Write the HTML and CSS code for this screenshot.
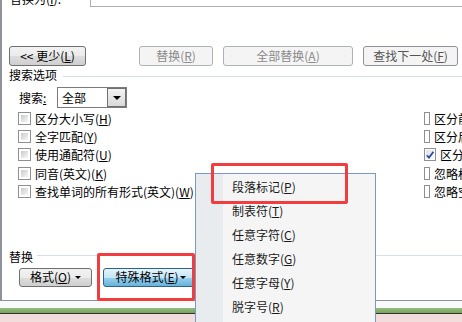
FILE: index.html
```html
<!DOCTYPE html>
<html lang="zh-CN">
<head>
    <meta charset="UTF-8">
    <title>查找和替换</title>
    <link rel="stylesheet" href="styles.css">
</head>
<body>
    <div class="screen">
        <div class="dialog">
            <div class="top-row">
                <span class="top-label">替换为(<u>I</u>):</span>
                <div class="top-input"></div>
            </div>

            <div class="btn-row">
                <button class="btn">&lt;&lt; 更少(<u>L</u>)</button>
                <button class="btn off push w-replace">替换(<u>R</u>)</button>
                <button class="btn off w-all">全部替换(<u>A</u>)</button>
                <button class="btn off find">查找下一处(<u>F</u>)</button>
            </div>

            <!-- 搜索选项 -->
            <div class="group-title">
                <span>搜索选项</span>
                <i class="rule"></i>
            </div>
            <div class="search-row">
                <span class="search-label">搜索<u>:</u></span>
                <div class="select">
                    <span class="select-text">全部</span>
                    <span class="select-btn"><i class="tri"></i></span>
                </div>
            </div>

            <div class="options">
                <div class="col">
                    <label class="check"><span class="box"></span>区分大小写(<u>H</u>)</label>
                    <label class="check"><span class="box"></span>全字匹配(<u>Y</u>)</label>
                    <label class="check"><span class="box"></span>使用通配符(<u>U</u>)</label>
                    <label class="check"><span class="box"></span>同音(英文)(<u>K</u>)</label>
                    <label class="check"><span class="box"></span>查找单词的所有形式(英文)(<u>W</u>)</label>
                </div>
                <div class="col">
                    <label class="check"><span class="box"></span>区分前缀(<u>X</u>)</label>
                    <label class="check"><span class="box"></span>区分后缀(<u>T</u>)</label>
                    <label class="check"><span class="box checked"><svg width="8" height="8" viewBox="0 0 8 8"><path d="M0.8 4.2 L3 6.6 L7.4 0.8" stroke="#2b4c9a" stroke-width="1.7" fill="none"/></svg></span>区分全/半角(<u>M</u>)</label>
                    <label class="check"><span class="box"></span>忽略标点符号(<u>S</u>)</label>
                    <label class="check"><span class="box"></span>忽略空格(<u>W</u>)</label>
                </div>
            </div>

            <!-- 替换 -->
            <div class="group-title replace">
                <span>替换</span>
                <i class="rule"></i>
            </div>
            <div class="fmt-row">
                <button class="btn w-fmt">格式(<u>O</u>) <i class="tri small"></i></button>
                <button class="btn pressed w-special">特殊格式(<u>E</u>)<i class="tri small"></i></button>
            </div>
        </div>

        <div class="taskbar">
            <div class="strip-light"></div>
            <div class="strip-green"></div>
            <div class="strip-dark"></div>
            <div class="strip-pink"></div>
        </div>

        <!-- 特殊格式 下拉菜单 -->
        <ul class="menu">
            <li>段落标记(<u>P</u>)</li>
            <li>制表符(<u>T</u>)</li>
            <li>任意字符(<u>C</u>)</li>
            <li>任意数字(<u>G</u>)</li>
            <li>任意字母(<u>Y</u>)</li>
            <li>脱字号(<u>R</u>)</li>
        </ul>

        <div class="mark mark-menu"></div>
        <div class="mark mark-btn"></div>
    </div>
</body>
</html>
```

FILE: styles.css
```css
* {
    box-sizing: border-box;
}

html, body {
    margin: 0;
    padding: 0;
    overflow: hidden;
}

body {
    font-family: "Noto Sans CJK SC", sans-serif;
    font-size: 12px;
    color: #000;
    background: #fff;
}

.screen {
    position: relative;
    width: 462px;
    height: 322px;
    overflow: hidden;
}

.dialog {
    height: 301px;
    border-left: 2px solid #8e929b;
    border-bottom: 1px solid #8e929b;
    display: flex;
    flex-direction: column;
}

/* top (cut off) row */
.top-row {
    height: 7px;
    display: flex;
    align-items: flex-end;
}

.top-label {
    width: 88px;
    padding-left: 8px;
    line-height: 12px;
    margin-bottom: 2px;
    white-space: nowrap;
}

.top-input {
    flex: 1;
    height: 20px;
    border: 1px solid #abadb3;
    border-right: none;
}

/* buttons */
.btn {
    font: inherit;
    color: #000;
    height: 20px;
    padding: 0;
    margin: 0;
    border: 1px solid #707070;
    border-radius: 3px;
    background: linear-gradient(#f2f2f2 0%, #ebebeb 50%, #dddddd 51%, #cfcfcf 100%);
    display: flex;
    align-items: center;
    justify-content: center;
    white-space: nowrap;
    line-height: 18px;
}

.btn.off {
    color: #8a8a8a;
    border-color: #adb2b5;
    background: #f4f4f4;
}

.btn.find {
    color: #555;
    border-color: #8f9397;
}

.btn.pressed {
    border-color: #2c628b;
    background: linear-gradient(#e5f4fc 0%, #c4e5f6 50%, #98d1ef 51%, #68b3db 100%);
}

.btn-row {
    margin-top: 39px;
    display: flex;
    padding-left: 7px;
    padding-right: 4px;
    gap: 10px;
}

.btn-row .btn:first-child {
    width: 77px;
}

.push {
    margin-left: auto;
}

.w-replace {
    width: 74px;
}

.w-all {
    width: 130px;
}

.find {
    width: 95px;
}

/* group titles */
.group-title {
    margin-top: 1px;
    height: 16px;
    line-height: 16px;
    display: flex;
    padding-left: 7px;
}

.rule {
    flex: 1;
    height: 1px;
    margin-top: 9px;
    margin-left: 6px;
    background: #d5dfe5;
}

.group-title.replace {
    margin-top: 48px;
}

.group-title.replace .rule {
    margin-top: 6px;
    margin-left: 4px;
}

/* search select */
.search-row {
    margin-top: 4px;
    height: 21px;
    display: flex;
    align-items: center;
    padding-left: 17px;
}

.search-label {
    width: 38px;
}

.select {
    width: 70px;
    height: 21px;
    border: 1px solid #7a7a7a;
    display: flex;
    background: #fff;
}

.select-text {
    flex: 1;
    padding-left: 4px;
    line-height: 19px;
}

.select-btn {
    width: 19px;
    border: 1px solid #707070;
    background: linear-gradient(#f3f3f3, #d9d9d9);
    display: flex;
    align-items: center;
    justify-content: center;
}

.tri {
    display: block;
    width: 0;
    height: 0;
    border-left: 4px solid transparent;
    border-right: 4px solid transparent;
    border-top: 4px solid #000;
}

.tri.small {
    border-left-width: 3px;
    border-right-width: 3px;
    border-top-width: 3px;
    margin-left: 4px;
}

.w-special .tri.small {
    margin-left: 1px;
}

/* checkboxes */
.options {
    margin-top: 1px;
    display: grid;
    grid-template-columns: 422px minmax(0, 1fr);
}

.col {
    display: flex;
    flex-direction: column;
}

.col:first-child {
    padding-left: 16px;
}

.check {
    height: 18.4px;
    display: flex;
    align-items: center;
    white-space: nowrap;
}

.box {
    width: 13px;
    height: 13px;
    margin-right: 4px;
    border: 1px solid #8e8f8f;
    padding: 2px;
    background: linear-gradient(135deg, #c8cbcf, #f6f6f6) content-box, #fff;
    display: flex;
    align-items: center;
    justify-content: center;
}

.box.checked {
    padding: 1px;
    background: linear-gradient(135deg, #dfe2e6, #fbfbfb) content-box, #fff;
}

/* bottom format buttons */
.fmt-row {
    margin-top: 3px;
    display: flex;
    padding-left: 17px;
    gap: 11px;
}

.fmt-row .btn {
    height: 19px;
}

.w-fmt {
    width: 73px;
}

.w-special {
    width: 95px;
}

/* screen under the dialog */
.taskbar {
    height: 21px;
    display: flex;
    flex-direction: column;
}

.strip-light {
    height: 7px;
    background: #fafafa;
}

.strip-green {
    height: 5px;
    background: linear-gradient(#93bd7c, #77a560);
}

.strip-dark {
    height: 1px;
    background: #3a302a;
}

.strip-pink {
    flex: 1;
    background: #f2dddd;
}

/* dropdown menu */
.menu {
    position: absolute;
    left: 195px;
    top: 173px;
    width: 181px;
    height: 160px;
    margin: 0;
    padding: 1px 0 0 0;
    list-style: none;
    border: 1px solid #7c98c6;
    background: linear-gradient(to right, #e9ecee 0, #e9ecee 27px, #f5f5f5 27px);
    color: #1b1b1b;
}

.menu li {
    height: 24px;
    line-height: 24px;
    padding-left: 36px;
}

/* red highlight marks */
.mark {
    position: absolute;
    border: 3px solid #f03e40;
    border-radius: 2px;
}

.mark-menu {
    left: 211px;
    top: 163px;
    width: 137px;
    height: 41px;
}

.mark-btn {
    left: 97px;
    top: 253px;
    width: 98px;
    height: 48px;
}
```
